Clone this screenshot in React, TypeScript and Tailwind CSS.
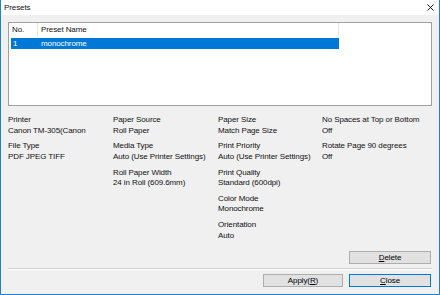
import React from 'react';

interface Field {
  label: string;
  value: string;
}

const columns: Field[][] = [
  [
    { label: 'Printer', value: 'Canon TM-305(Canon' },
    { label: 'File Type', value: 'PDF JPEG TIFF' },
  ],
  [
    { label: 'Paper Source', value: 'Roll Paper' },
    { label: 'Media Type', value: 'Auto (Use Printer Settings)' },
    { label: 'Roll Paper Width', value: '24 in Roll (609.6mm)' },
  ],
  [
    { label: 'Paper Size', value: 'Match Page Size' },
    { label: 'Print Priority', value: 'Auto (Use Printer Settings)' },
    { label: 'Print Quality', value: 'Standard (600dpi)' },
    { label: 'Color Mode', value: 'Monochrome' },
    { label: 'Orientation', value: 'Auto' },
  ],
  [
    { label: 'No Spaces at Top or Bottom', value: 'Off' },
    { label: 'Rotate Page 90 degrees', value: 'Off' },
  ],
];

function Button({ children, primary, width }: { children: React.ReactNode; primary?: boolean; width: string }) {
  return (
    <button
      className={`${width} h-[13px] flex items-center justify-center bg-[#e1e1e1] border text-[8px] leading-none text-black ${
        primary ? 'border-[#0078d7]' : 'border-[#adadad]'
      }`}
    >
      {children}
    </button>
  );
}

export default function App() {
  return (
    <div
      className="w-[440px] h-[295px] flex flex-col border-x border-b border-[#1883d7] bg-[#f0f0f0] text-[#111] whitespace-nowrap tracking-[-0.1px]"
      style={{ fontFamily: '"Liberation Sans", Arial, sans-serif' }}
    >
      {/* title bar */}
      <div className="h-[15px] shrink-0 bg-white flex items-center justify-between pl-[3px] pr-[5px]">
        <span className="text-[8px] leading-none">Presets</span>
        <svg width="7" height="7" viewBox="0 0 7 7" className="text-black">
          <path d="M0.5 0.5 L6.5 6.5 M6.5 0.5 L0.5 6.5" stroke="currentColor" strokeWidth="0.9" />
        </svg>
      </div>

      <div className="flex flex-col px-[7px]">
        {/* preset list */}
        <div className="mt-[7px] w-[424px] h-[84px] bg-white border border-[#a0a0a0] text-[8px]">
          <div className="flex h-[14px] items-center">
            <div className="w-[29px] h-full flex items-center pl-[3px] border-r border-[#e5e5e5]">No.</div>
            <div className="w-[301px] h-full flex items-center pl-[3px] border-r border-[#e5e5e5]">Preset Name</div>
          </div>
          <div className="ml-[2px] mt-[1px] w-[328px] h-[11px] flex items-center bg-[#0078d7] text-white">
            <div className="w-[28px] pl-[2px]">1</div>
            <div className="pl-[2px]">monochrome</div>
          </div>
        </div>

        {/* preset details */}
        <div className="mt-[9px] grid grid-cols-[105px_105px_104px_1fr] text-[8px] leading-[10.5px]">
          {columns.map((col, i) => (
            <div key={i} className="flex flex-col gap-[5.3px]">
              {col.map((f) => (
                <div key={f.label} className="flex flex-col">
                  <span>{f.label}</span>
                  <span>{f.value}</span>
                </div>
              ))}
            </div>
          ))}
        </div>

        <div className="mt-[10px] flex justify-end pr-[1px]">
          <Button width="w-[82px]">
            <span><u>D</u>elete</span>
          </Button>
        </div>

        <div className="mt-[4px] h-[2px] w-[424px] border-t border-[#d0d0d0] border-b border-b-white" />

        <div className="mt-[4px] flex justify-end gap-[6px] pr-[1px]">
          <Button width="w-[80px]">
            <span>Apply(<u>R</u>)</span>
          </Button>
          <Button width="w-[82px]" primary>
            <span><u>C</u>lose</span>
          </Button>
        </div>
      </div>
    </div>
  );
}
